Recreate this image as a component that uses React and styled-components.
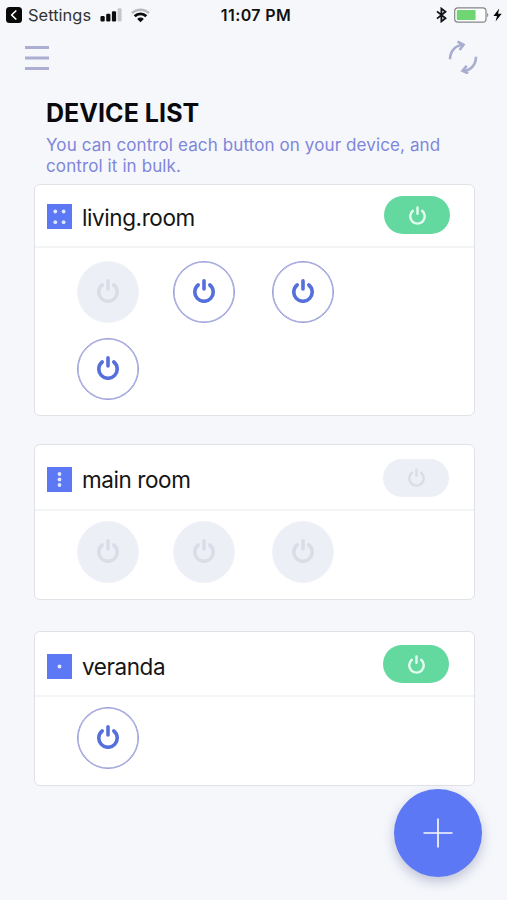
import styled, { createGlobalStyle, ThemeProvider } from "styled-components";

const theme = {
  bg: "#f5f7fb",
  white: "#ffffff",
  blue: "#5c78f5",
  line: "#e1e2e8",
  off: "#edeff7",
  offIcon: "#dadce8",
  green: "#63d9a0",
};

const GlobalStyle = createGlobalStyle`
  * {
    box-sizing: border-box;
  }
  body {
    margin: 0;
    background-color: #f5f7fb;
    font-family: Inter, "Liberation Sans", sans-serif;
  }
  h1, h2, p {
    margin: 0;
    font-weight: 400;
  }
  button {
    border: none;
    padding: 0;
    background: none;
  }
  svg {
    display: block;
    flex: none;
  }
`;

const Screen = styled.div`
  position: relative;
  width: 507px;
  height: 900px;
  overflow: hidden;
  background-color: ${({ theme }) => theme.bg};
`;

const StatusBar = styled.div`
  height: 30px;
  padding: 0 5px 0 6px;
  display: grid;
  grid-template-columns: 1fr auto 1fr;
  align-items: center;
  color: #111;
`;

const StatusSide = styled.div`
  display: flex;
  align-items: center;
  justify-content: ${(props) => props.$juc || "flex-start"};
`;

const BackLabel = styled.span`
  width: 63px;
  margin: 0 9px 0 6px;
  font-size: 16.4px;
  line-height: 30px;
  letter-spacing: 0.05px;
  white-space: nowrap;
  color: #333;
`;

const Clock = styled.span`
  font-size: 16px;
  font-weight: 600;
  line-height: 30px;
  letter-spacing: 0.4px;
  margin-left: 4px;
  white-space: nowrap;
`;

const NavBar = styled.div`
  height: 58px;
  padding: 10px 29px 0 25px;
  display: flex;
  justify-content: space-between;
  align-items: flex-start;
`;

const NavButton = styled.button`
  padding-top: ${(props) => props.$top || "0"};
`;

const Intro = styled.div`
  padding: 10px 46px 0;
  height: 96px;
`;

const Title = styled.h1`
  font-size: 25px;
  font-weight: 700;
  line-height: 30px;
  letter-spacing: 0.05px;
  color: #0a0a0c;
`;

const Description = styled.p`
  margin-top: 7px;
  font-size: 17px;
  line-height: 21px;
  letter-spacing: 0.11px;
  white-space: nowrap;
  color: #7f86d9;
`;

const DeviceList = styled.div`
  padding-left: 34px;
`;

const Card = styled.section`
  width: 441px;
  height: ${(props) => props.$height || "156px"};
  margin-bottom: ${(props) => props.$gap || "31px"};
  border: 1px solid ${({ theme }) => theme.line};
  border-radius: 6px;
  background-color: ${({ theme }) => theme.white};
`;

const CardHeader = styled.div`
  height: ${(props) => props.$height || "65px"};
  padding: ${(props) => props.$top || "2px"} ${(props) => props.$right || "25px"} 0 11.5px;
  display: flex;
  align-items: center;
  border-bottom: 2px solid #f3f4f6;
`;

const IconBox = styled.div`
  padding-top: ${(props) => props.$top || "3px"};
`;

const DeviceName = styled.h2`
  flex: 1;
  margin-left: 10.5px;
  padding-top: 4px;
  font-size: 22.5px;
  line-height: 30px;
  letter-spacing: -0.42px;
  color: #151515;
`;

const BulkSwitch = styled.button`
  width: 66px;
  height: 38px;
  margin-bottom: 1px;
  border-radius: 19px;
  display: flex;
  align-items: center;
  justify-content: center;
  background-color: ${(props) => (props.$on ? props.theme.green : props.theme.off)};
  color: ${(props) => (props.$on ? "#e4fbf0" : props.theme.offIcon)};
`;

const ButtonGrid = styled.div`
  padding: ${(props) => props.$top || "10px"} 0 0 42px;
  display: grid;
  grid-template-columns: 96px 98.5px 62px;
  row-gap: 15px;
`;

const RoundButton = styled.button`
  width: 62px;
  height: 62px;
  border-radius: 50%;
  display: flex;
  align-items: center;
  justify-content: center;
  padding-bottom: 2px;
  border: 1px solid ${(props) => (props.$on ? "#989cd9" : "#f1f3f9")};
  box-shadow: ${(props) => (props.$on ? "inset 0 0 0 0.6px #989cd9" : "none")};
  background-color: ${(props) => (props.$on ? props.theme.white : props.theme.off)};
  color: ${(props) => (props.$on ? "#5670db" : props.theme.offIcon)};
`;

const AddButton = styled.button`
  position: absolute;
  left: 394px;
  top: 789px;
  width: 88px;
  height: 88px;
  border-radius: 50%;
  display: flex;
  align-items: center;
  justify-content: center;
  background-color: ${({ theme }) => theme.blue};
  box-shadow: 0 5px 12px rgba(70, 75, 130, 0.3);
`;

const PowerIcon = ({ size = 24, stroke = 3.6 }) => (
  <svg width={size} height={size} viewBox="0 0 24 24" fill="none" stroke="currentColor" strokeWidth={stroke} strokeLinecap="round">
    <path d="M12 1.8V9.9" />
    <path d="M6.1 6A9.2 9.2 0 1 0 17.9 6" />
  </svg>
);

const BackIcon = () => (
  <svg width="16" height="16" viewBox="0 0 16 16">
    <rect width="16" height="16" rx="3.5" fill="#080808" />
    <path d="M9.8 4 5.6 8l4.2 4" fill="none" stroke="#fff" strokeWidth="1.7" strokeLinecap="round" strokeLinejoin="round" />
  </svg>
);

const SignalIcon = () => (
  <svg width="22" height="14" viewBox="0 0 22 14" fill="#0c0c0c">
    <rect x="0.5" y="8" width="4.2" height="5.5" rx="1.2" />
    <rect x="6.2" y="5.8" width="4.2" height="7.7" rx="1.2" />
    <rect x="11.9" y="3.2" width="4.2" height="10.3" rx="1.2" />
    <rect x="17.6" y="0.3" width="4" height="13.2" rx="1.2" fill="#c6c7cc" />
  </svg>
);

const WifiIcon = () => (
  <svg width="19" height="15" viewBox="0 0 19 15" fill="none">
    <path d="M1 5.2A12 12 0 0 1 18 5.2" stroke="#b9bac0" strokeWidth="2.5" />
    <path d="M3.7 8.3A8 8 0 0 1 15.3 8.3" stroke="#0c0c0c" strokeWidth="2.8" />
    <path d="M6.2 11A4.5 4.5 0 0 1 12.8 11L9.5 14.2Z" fill="#0c0c0c" />
  </svg>
);

const BluetoothIcon = () => (
  <svg width="11" height="16" viewBox="0 0 11 16" fill="none" stroke="#111" strokeWidth="1.8">
    <path d="M1 4.4 9.5 11.2 5.4 14.4V1.6L9.5 4.8 1 11.6" />
  </svg>
);

const BatteryIcon = () => (
  <svg width="36" height="16" viewBox="0 0 36 16">
    <rect x="0.7" y="0.9" width="31.3" height="14.2" rx="3.2" fill="#fcfdfd" stroke="#858689" strokeWidth="1.2" />
    <rect x="2.8" y="3" width="18.8" height="10" rx="1" fill="#70d674" />
    <path d="M33.2 5.6Q35.4 8 33.2 10.4Z" fill="#858689" />
  </svg>
);

const BoltIcon = () => (
  <svg width="9" height="14" viewBox="0 0 9 14">
    <path d="M6.2 0.6 0.4 7.9H4L2.6 13.6 8.7 5.7H5Z" fill="#080808" />
  </svg>
);

const MenuIcon = () => (
  <svg width="24" height="26" viewBox="0 0 24 26" stroke="#acaed2" strokeWidth="2.8">
    <path d="M0 2.5H24M0 13H24M0 23.5H24" />
  </svg>
);

const RefreshIcon = () => (
  <svg width="30" height="34" viewBox="0 0 30 34" fill="none" stroke="#a9add0" strokeWidth="2.6">
    <path d="M2 19.3C2 11.5 7 5.2 15.2 4.8" />
    <path d="M9.6 1.7 15.5 4.8 11.6 10" />
    <path d="M28 16.8C28 24.5 23 30.5 15.2 31" />
    <path d="M18.7 25.8 14.5 30.7 20.1 33.4" />
  </svg>
);

const PlusIcon = () => (
  <svg width="30" height="30" viewBox="0 0 30 30" stroke="#f7f9ff" strokeWidth="1.7">
    <path d="M15 0.5V29.5M0.5 15H29.5" />
  </svg>
);

const DOTS = {
  1: [[12.5, 12.5]],
  3: [[12.5, 7], [12.5, 12.5], [12.5, 18]],
  4: [[8.3, 7.5], [16.6, 7.5], [8.3, 18.2], [16.6, 18.2]],
};

const DeviceIcon = ({ count }) => (
  <svg width="25" height="25" viewBox="0 0 25 25">
    <rect width="25" height="25" fill="#5c78f5" />
    {DOTS[count].map(([x, y]) => (
      <circle key={`${x}-${y}`} cx={x} cy={y} r="1.9" fill="#dfe8ff" />
    ))}
  </svg>
);

const devices = [
  {
    name: "living.room",
    on: true,
    icon: 4,
    buttons: [false, true, true, true],
    height: "232px",
    gap: "28px",
    header: "63px",
    headerTop: "0px",
    iconTop: "2px",
    right: "24px",
    top: "13px",
  },
  { name: "main room", on: false, icon: 3, buttons: [false, false, false], header: "66px" },
  { name: "veranda", on: true, icon: 1, buttons: [true], height: "155px" },
];

const DeviceCard = ({ device }) => (
  <Card $height={device.height} $gap={device.gap}>
    <CardHeader $height={device.header} $top={device.headerTop} $right={device.right}>
      <IconBox $top={device.iconTop}>
        <DeviceIcon count={device.icon} />
      </IconBox>
      <DeviceName>{device.name}</DeviceName>
      <BulkSwitch $on={device.on}>
        <PowerIcon size={19} stroke={3.1} />
      </BulkSwitch>
    </CardHeader>
    <ButtonGrid $top={device.top}>
      {device.buttons.map((on, i) => (
        <RoundButton key={i} $on={on}>
          <PowerIcon />
        </RoundButton>
      ))}
    </ButtonGrid>
  </Card>
);

const SignalGroup = styled.div`
  display: flex;
  align-items: center;
  gap: 9px;
`;

const PowerGroup = styled.div`
  display: flex;
  align-items: center;
  gap: 3px;
  & > svg:first-child {
    margin-right: 4px;
  }
`;

const App = () => {
  return (
    <ThemeProvider theme={theme}>
      <GlobalStyle />
      <Screen>
        <StatusBar>
          <StatusSide>
            <BackIcon />
            <BackLabel>Settings</BackLabel>
            <SignalGroup>
              <SignalIcon />
              <WifiIcon />
            </SignalGroup>
          </StatusSide>
          <Clock>11:07 PM</Clock>
          <StatusSide $juc="flex-end">
            <PowerGroup>
              <BluetoothIcon />
              <BatteryIcon />
              <BoltIcon />
            </PowerGroup>
          </StatusSide>
        </StatusBar>
        <NavBar>
          <NavButton $top="5px">
            <MenuIcon />
          </NavButton>
          <NavButton>
            <RefreshIcon />
          </NavButton>
        </NavBar>
        <Intro>
          <Title>DEVICE LIST</Title>
          <Description>
            You can control each button on your device, and
            <br />
            control it in bulk.
          </Description>
        </Intro>
        <DeviceList>
          {devices.map((device) => (
            <DeviceCard key={device.name} device={device} />
          ))}
        </DeviceList>
        <AddButton>
          <PlusIcon />
        </AddButton>
      </Screen>
    </ThemeProvider>
  );
};

export default App;
